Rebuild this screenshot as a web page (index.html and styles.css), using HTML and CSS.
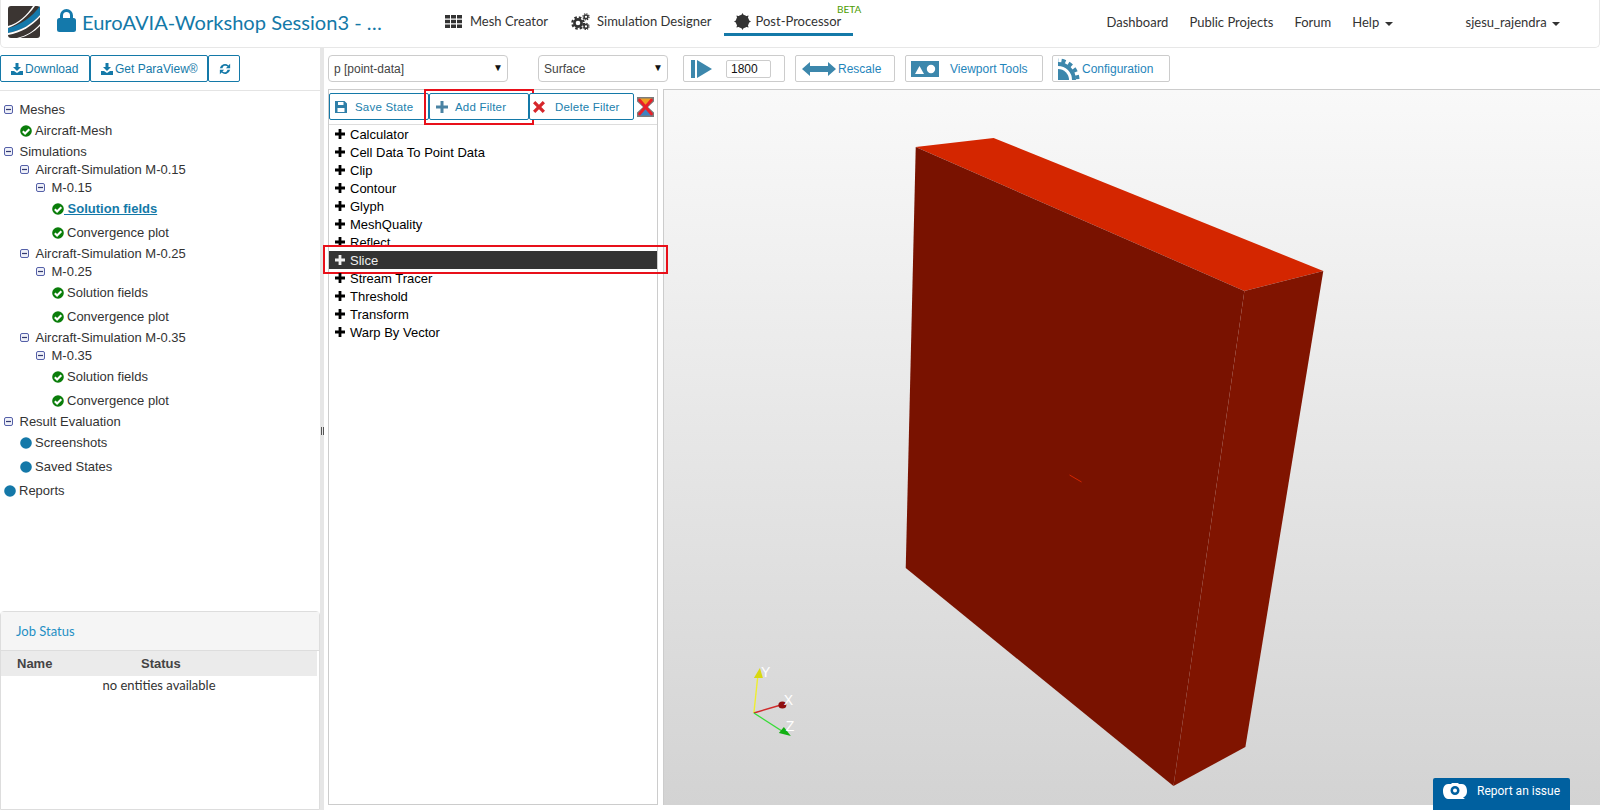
FILE: index.html
```html
<!DOCTYPE html>
<html lang="en">
<head>
<meta charset="utf-8">
<title>Post-Processor</title>
<link rel="stylesheet" href="styles.css">
</head>
<body>
<svg class="defs" width="0" height="0" aria-hidden="true">
  <symbol id="i-minus" viewBox="0 0 9 9"><rect x=".5" y=".5" width="8" height="8" rx="1.5" fill="#eef0f8" stroke="#5560a8"/><path d="M2 4.5h5" stroke="#333a70" stroke-width="1.2"/></symbol>
  <symbol id="i-check" viewBox="0 0 12 12"><circle cx="6" cy="6" r="5.8" fill="#0a7d0a"/><path d="M2.800 6.200l2.300 2.300 4.200-4.300" fill="none" stroke="#fff" stroke-width="2.100"/></symbol>
  <symbol id="i-dot" viewBox="0 0 12 12"><circle cx="6" cy="6" r="5.8" fill="#1478a8"/></symbol>
  <symbol id="i-plus" viewBox="0 0 10 10"><path d="M3.600 0h2.800v3.600H10v2.800H6.400V10H3.600V6.400H0V3.600h3.600z"/></symbol>
  <symbol id="i-down" viewBox="0 0 12 12"><path d="M4.500 0h3v4h2.500L6 8 2 4h2.500zM0 8h3l3 2 3-2h3v4H0z"/></symbol>
</svg>

<header class="topbar">
  <svg class="logo" viewBox="0 0 32 32"><rect width="32" height="32" rx="3" fill="#3b3532"/><path d="M0 22C13 19 24 11 32 0v9C24 18 13 25 0 27z" fill="#1479ab"/><path d="M0 20C11 17 19 9 25 0h2C20 10 11 18 0 22zM0 27c13-2 24-9 32-18v2C24 20 13 27 0 29zM9 32c9-2 17-7 23-14v2c-6 6-13 10-20 12z" fill="#fff"/></svg>
  <svg class="lock" viewBox="0 0 19 23"><path d="M4.500 10V6.500a5 5 0 0 1 10 0V10" fill="none" stroke="#1479ab" stroke-width="3"/><rect y="9" width="19" height="14" rx="2.500" fill="#1479ab"/></svg>
  <h1 class="title">EuroAVIA-Workshop Session3 - …</h1>
  <nav class="mainnav">
    <a class="navitem">
      <svg class="navicon" viewBox="0 0 17 13"><path d="M0 0h5v3.600H0zM6 0h5v3.600H6zM12 0h5v3.600h-5zM0 4.700h5v3.600H0zM6 4.700h5v3.600H6zM12 4.700h5v3.600h-5zM0 9.400h5V13H0zM6 9.400h5V13H6zM12 9.400h5V13h-5z" fill="#333"/></svg>
      Mesh Creator</a>
    <a class="navitem">
      <svg class="navicon cogs" viewBox="0 0 19 17"><g fill="none" stroke="#333"><circle cx="7" cy="10" r="3.600" stroke-width="2.600"/><circle cx="7" cy="10" r="5.700" stroke-width="2.200" stroke-dasharray="2.500 2"/><circle cx="15" cy="3.800" r="1.900" stroke-width="1.500"/><circle cx="15" cy="3.800" r="3.100" stroke-width="1.100" stroke-dasharray="1.300 1.130"/><circle cx="15" cy="13.400" r="1.900" stroke-width="1.500"/><circle cx="15" cy="13.400" r="3.100" stroke-width="1.100" stroke-dasharray="1.300 1.130"/></g></svg>
      Simulation Designer</a>
    <a class="navitem active">
      <svg class="navicon sun" viewBox="0 0 16 16"><circle cx="8" cy="8" r="6.300" fill="#333"/><path d="M8 0l1.500 2.500h-3zM8 16l-1.500-2.500h3zM0 8l2.500-1.500v3zM16 8l-2.500 1.500v-3zM2.300 2.300l2.800.7-2.100 2.100zM13.700 13.700l-2.800-.7 2.100-2.100zM13.700 2.300l-.7 2.800-2.100-2.100zM2.300 13.700l.7-2.800 2.100 2.100z" fill="#333"/></svg>
      Post-Processor<span class="beta">BETA</span></a>
  </nav>
  <nav class="sidenav">
    <a class="sidelink">Dashboard</a>
    <a class="sidelink">Public Projects</a>
    <a class="sidelink">Forum</a>
    <a class="sidelink">Help <i class="caret"></i></a>
    <a class="sidelink user">sjesu_rajendra <i class="caret"></i></a>
  </nav>
</header>

<div class="workspace">
  <aside class="sidebar">
    <div class="sidetools">
      <button class="tbtn dl"><svg class="ic12" viewBox="0 0 12 12"><use href="#i-down"/></svg>Download</button>
      <button class="tbtn pv"><svg class="ic12" viewBox="0 0 12 12"><use href="#i-down"/></svg>Get ParaView®</button>
      <button class="tbtn rf"><svg class="ic12" viewBox="0 0 14 14"><path d="M1 6a6 6 0 0 1 10-3l2-2v5H8l2-2a3.700 3.700 0 0 0-6 2zM13 8a6 6 0 0 1-10 3l-2 2V8h5l-2 2a3.700 3.700 0 0 0 6-2z"/></svg></button>
    </div>
    <ul class="tree">
      <li class="cap l0"><svg class="box"><use href="#i-minus"/></svg>Meshes</li>
      <li class="leaf l1"><svg class="st"><use href="#i-check"/></svg>Aircraft-Mesh</li>
      <li class="cap l0"><svg class="box"><use href="#i-minus"/></svg>Simulations</li>
      <li class="cap l1"><svg class="box"><use href="#i-minus"/></svg>Aircraft-Simulation M-0.15</li>
      <li class="cap l2"><svg class="box"><use href="#i-minus"/></svg>M-0.15</li>
      <li class="leaf l3"><svg class="st"><use href="#i-check"/></svg><a class="current">&nbsp;Solution fields</a></li>
      <li class="leaf l3"><svg class="st"><use href="#i-check"/></svg>Convergence plot</li>
      <li class="cap l1"><svg class="box"><use href="#i-minus"/></svg>Aircraft-Simulation M-0.25</li>
      <li class="cap l2"><svg class="box"><use href="#i-minus"/></svg>M-0.25</li>
      <li class="leaf l3"><svg class="st"><use href="#i-check"/></svg>Solution fields</li>
      <li class="leaf l3"><svg class="st"><use href="#i-check"/></svg>Convergence plot</li>
      <li class="cap l1"><svg class="box"><use href="#i-minus"/></svg>Aircraft-Simulation M-0.35</li>
      <li class="cap l2"><svg class="box"><use href="#i-minus"/></svg>M-0.35</li>
      <li class="leaf l3"><svg class="st"><use href="#i-check"/></svg>Solution fields</li>
      <li class="leaf l3"><svg class="st"><use href="#i-check"/></svg>Convergence plot</li>
      <li class="cap l0"><svg class="box"><use href="#i-minus"/></svg>Result Evaluation</li>
      <li class="leaf l1"><svg class="st"><use href="#i-dot"/></svg>Screenshots</li>
      <li class="leaf l1"><svg class="st"><use href="#i-dot"/></svg>Saved States</li>
      <li class="leaf l0"><svg class="st"><use href="#i-dot"/></svg>Reports</li>
    </ul>
    <section class="jobs">
      <h2 class="jobs-head">Job Status</h2>
      <div class="jobs-cols"><span class="col-name">Name</span><span>Status</span></div>
      <p class="jobs-empty">no entities available</p>
    </section>
  </aside>

  <div class="splitter"><span class="grip"></span></div>

  <main class="content">
    <div class="toolbar">
      <div class="select sel-a">p [point-data]<i class="sel-arrow">▼</i></div>
      <div class="select sel-b">Surface<i class="sel-arrow">▼</i></div>
      <div class="gbtn play">
        <svg class="gi" viewBox="0 0 21 18"><path d="M0 0h4v18H0zM6 0l15 9-15 9z"/></svg>
        <span class="timefield">1800</span>
      </div>
      <button class="gbtn rescale">
        <svg class="gi wide" viewBox="0 0 34 14"><path d="M0 7l8-7v4h18V0l8 7-8 7v-4H8v4z"/></svg>Rescale</button>
      <button class="gbtn vtools">
        <svg class="gi vt" viewBox="0 0 28 16"><path fill-rule="evenodd" d="M0 0h28v16H0zM4 13h9L8.500 5zM20 3.800a4.200 4.200 0 1 0 0 8.400 4.200 4.200 0 0 0 0-8.400z"/></svg>Viewport Tools</button>
      <button class="gbtn config">
        <svg class="gi cf" viewBox="0 0 22 22"><circle class="cf-solid" cx="0" cy="22" r="11"/><circle class="cf-ring" cx="0" cy="22" r="16"/><circle class="cf-teeth" cx="0" cy="22" r="19.500"/></svg>Configuration</button>
    </div>
    <div class="panels">
      <section class="filters">
        <div class="filter-actions">
          <button class="fbtn save">
            <svg class="fi" viewBox="0 0 12 12"><path fill-rule="evenodd" d="M0 0h9.500L12 2.500V12H0zM3 1v3h5.500V1zM2.500 7v4h7V7z" fill="#2f7fa8"/></svg>Save State</button>
          <button class="fbtn add marked">
            <svg class="fi" viewBox="0 0 12 12"><path d="M4.500 0h3v4.500H12v3H7.500V12h-3V7.500H0v-3h4.500z" fill="#4a83a3"/></svg>Add Filter</button>
          <button class="fbtn del">
            <svg class="fi xi" viewBox="0 0 12 12"><path d="M0 2.300L2.300 0 6 3.700 9.700 0 12 2.300 8.300 6 12 9.700 9.700 12 6 8.300 2.300 12 0 9.700 3.700 6z" fill="#d6262b"/></svg>Delete Filter</button>
          <svg class="clear" viewBox="0 0 17 20"><path d="M0 0h17v4.500L11 10l6 5.500V20H0v-4.500L6 10 0 4.500z" fill="#7c7c7c"/><path d="M2 1.500h13v3l-6.500 5-6.500-5z" fill="#ef9f21"/><path d="M2 18.500h13v-3l-6.500-5-6.500 5z" fill="#3e82c0"/><path d="M2.500 3l12 14M14.500 3l-12 14" stroke="#ea1f28" stroke-width="2.800" stroke-linecap="round"/></svg>
        </div>
        <ul class="filter-list">
          <li class="fitem"><svg class="plus"><use href="#i-plus"/></svg>Calculator</li>
          <li class="fitem"><svg class="plus"><use href="#i-plus"/></svg>Cell Data To Point Data</li>
          <li class="fitem"><svg class="plus"><use href="#i-plus"/></svg>Clip</li>
          <li class="fitem"><svg class="plus"><use href="#i-plus"/></svg>Contour</li>
          <li class="fitem"><svg class="plus"><use href="#i-plus"/></svg>Glyph</li>
          <li class="fitem"><svg class="plus"><use href="#i-plus"/></svg>MeshQuality</li>
          <li class="fitem"><svg class="plus"><use href="#i-plus"/></svg>Reflect</li>
          <li class="fitem picked"><svg class="plus"><use href="#i-plus"/></svg>Slice</li>
          <li class="fitem"><svg class="plus"><use href="#i-plus"/></svg>Stream Tracer</li>
          <li class="fitem"><svg class="plus"><use href="#i-plus"/></svg>Threshold</li>
          <li class="fitem"><svg class="plus"><use href="#i-plus"/></svg>Transform</li>
          <li class="fitem"><svg class="plus"><use href="#i-plus"/></svg>Warp By Vector</li>
        </ul>
      </section>
      <section class="viewport">
        <svg class="scene" viewBox="663 90 937 715" preserveAspectRatio="none">
          <polygon points="915,147 993,138 1323,271 1244,291" fill="#d42600"/>
          <polygon points="915,147 1244,291 1173,786 905,568" fill="#791200"/>
          <polygon points="1244,291 1323,271 1245,747 1173,786" fill="#801400"/>
          <path d="M1069 475l12 7" stroke="#d42600" stroke-width="1"/>
          <path d="M753 713l4-38" stroke="#eeee30" stroke-width="1.400"/>
          <path d="M753 713l27-8" stroke="#d02a2a" stroke-width="1.400"/>
          <path d="M753 713l28 18" stroke="#38dc38" stroke-width="1.400"/>
          <polygon points="759,668 762,678 753,678" fill="#d8d810"/>
          <ellipse cx="781.500" cy="705" rx="4" ry="3.500" fill="#8f0f0f"/>
          <polygon points="778,733 783,727 790,736" fill="#12b012"/>
          <text class="axis" x="760" y="677">Y</text>
          <text class="axis" x="783" y="705">X</text>
          <text class="axis" x="785" y="731">Z</text>
        </svg>
      </section>
    </div>
  </main>
</div>

<a class="report">
  <svg class="report-icon" viewBox="0 0 24 16"><path fill-rule="evenodd" d="M5 1h3l1-1h6l1 1h3c3 0 5 3 5 7s-2 6-4 6.500l2 1.500H5c-3 0-5-4-5-8s2-7 5-7zM12 3a4.500 4.500 0 1 0 0 9 4.500 4.500 0 0 0 0-9zM12 5.500a2 2 0 1 1 0 4 2 2 0 0 1 0-4z" fill="#fff"/></svg>
  Report an issue</a>
</body>
</html>
```
FILE: styles.css
```css
* { box-sizing: border-box; }
html, body { margin: 0; height: 810px; overflow: hidden; background: #fff; }
body { font-family: "Liberation Sans", Arial, sans-serif; font-size: 13px; color: #333; display: flex; flex-direction: column; }
.defs { position: absolute; }
ul { list-style: none; margin: 0; padding: 0; }
button { font-family: inherit; background: #fff; cursor: pointer; margin: 0; }

/* Top bar */
.topbar { height: 48px; flex: none; display: flex; align-items: flex-start; border: 1px solid #e7e7e7; border-top: 0; border-radius: 0 0 5px 5px; font-family: Lato, sans-serif; }
.logo { width: 32px; height: 32px; margin: 6px 0 0 7px; flex: none; }
.lock { width: 19px; height: 23px; margin: 9px 0 0 17px; flex: none; }
.title { margin: 6px 0 0 6px; width: 306px; font-size: 20.100px; line-height: 32px; font-weight: 400; color: #1479a8; white-space: nowrap; }
.mainnav { display: flex; margin-left: 47px; }
.navitem { position: relative; display: flex; align-items: center; height: 36px; padding: 6px 10px 0; font-size: 13px; color: #333; white-space: nowrap; }
.navicon { width: 17px; height: 13px; margin-right: 8px; flex: none; }
.navicon.cogs { width: 19px; height: 17px; margin-right: 7px; }
.navicon.sun { width: 17px; height: 17px; margin-right: 5px; }
.navitem + .navitem { margin-left: 3px; }
.navitem.active { border-bottom: 3px solid #1479a8; padding: 9px 12px 0 10px; margin-left: 2px; }
.beta { position: absolute; top: 3px; right: -8px; font-size: 10px; line-height: 12px; color: #4d9c00; }
.sidenav { display: flex; margin-left: auto; padding: 13px 39px 0 0; font-size: 13px; line-height: 18px; }
.sidelink { margin-left: 21px; color: #333; white-space: nowrap; }
.sidelink.user { margin-left: 73px; }
.caret { display: inline-block; width: 0; height: 0; margin-left: 2px; vertical-align: middle; border-top: 4px solid #333; border-left: 4px solid transparent; border-right: 4px solid transparent; }

/* Layout */
.workspace { flex: 1; min-height: 0; display: flex; }
.sidebar { width: 320px; flex: none; display: flex; flex-direction: column; }
.splitter { width: 4px; flex: none; background: #e6e6e6; display: flex; align-items: center; justify-content: center; }
.grip { width: 3px; height: 8px; margin-top: 4px; border-left: 1px solid #555; border-right: 1px solid #555; }
.content { flex: 1; min-width: 0; display: flex; flex-direction: column; padding-left: 4px; }

/* Sidebar */
.sidetools { display: flex; height: 43px; padding: 7px 0 0; border-bottom: 1px solid #e4e4e4; flex: none; }
.tbtn { display: flex; align-items: center; height: 27px; padding: 0 0 0 10px; border: 1px solid #1479a8; border-radius: 2px; color: #1479a8; font-size: 12px; font-family: "Liberation Sans", sans-serif; }
.tbtn svg { fill: #1479a8; margin-right: 2px; }
.tbtn.dl { width: 90px; }
.tbtn.pv { width: 118px; }
.tbtn.rf { width: 32px; }
.ic12 { width: 12px; height: 12px; flex: none; }
.tree { padding-top: 9.500px; }
.cap { height: 18px; line-height: 18px; display: flex; align-items: center; white-space: nowrap; }
.leaf { height: 24px; line-height: 24px; display: flex; align-items: center; white-space: nowrap; }
.box { width: 9px; height: 9px; margin-right: 6.500px; flex: none; }
.st { width: 12px; height: 12px; margin-right: 3px; flex: none; }
.cap.l0 { padding-left: 4px; }
.cap.l1 { padding-left: 20px; }
.cap.l2 { padding-left: 36px; }
.leaf.l0 { padding-left: 4px; }
.leaf.l1 { padding-left: 20px; }
.leaf.l3 { padding-left: 52px; }
.current { margin-left: -3px; color: #1479a8; font-weight: 700; text-decoration: underline; }

.jobs { margin: auto 0 0 0; height: 199px; width: 320px; border: 1px solid #ddd; border-radius: 4px 4px 0 0; flex: none; font-family: Lato, sans-serif; }
.jobs-head { margin: 0; height: 39px; padding-left: 15px; line-height: 38px; background: #f5f5f5; border-bottom: 1px solid #ddd; font-size: 13px; font-weight: 400; color: #1f8fc4; }
.jobs-cols { display: flex; height: 25px; line-height: 25px; margin-right: 2px; padding-left: 16px; background: #ebebeb; font: 700 13px/25px "Liberation Sans", sans-serif; color: #444; }
.col-name { width: 124px; }
.jobs-empty { margin: 0; padding-right: 2px; text-align: center; font-size: 13px; line-height: 18px; color: #333; }

/* Toolbar */
.toolbar { display: flex; height: 41px; flex: none; padding-top: 7px; }
.select { position: relative; height: 27px; line-height: 27px; padding-left: 5px; border: 1px solid #ccc; border-radius: 4px; font-size: 12px; color: #444; }
.sel-a { width: 180px; }
.sel-b { width: 130px; margin-left: 30px; }
.sel-arrow { position: absolute; right: 4px; top: -2px; font-style: normal; font-size: 10px; color: #111; }
.gbtn { display: flex; align-items: center; height: 27px; border: 1px solid #ccc; border-radius: 2px; padding: 0; color: #1f85bb; font: 12px "Liberation Sans", sans-serif; background: #fff; }
.gi { fill: #3c87ac; flex: none; }
.play { width: 102px; margin-left: 15px; padding-left: 7px; }
.play .gi { width: 21px; height: 18px; }
.timefield { width: 45px; height: 18px; margin-left: 14px; padding-left: 4px; border: 1px solid #ccc; border-radius: 2px; line-height: 16px; font-size: 12px; color: #111; }
.rescale { width: 100px; margin-left: 10px; padding-left: 6px; }
.gi.wide { width: 34px; height: 14px; margin-right: 2px; }
.vtools { width: 138px; margin-left: 10px; padding-left: 5px; }
.gi.vt { width: 28px; height: 16px; margin-right: 11px; }
.config { width: 118px; margin-left: 9px; padding-left: 5px; }
.gi.cf { width: 22px; height: 22px; margin-right: 2px; }
.cf-solid { fill: #3c87ac; }
.cf-ring { fill: none; stroke: #3c87ac; stroke-width: 4; }
.cf-teeth { fill: none; stroke: #3c87ac; stroke-width: 4; stroke-dasharray: 4 3.300; }

/* Panels */
.panels { flex: 1; min-height: 0; display: flex; padding-bottom: 5px; }
.filters { width: 330px; flex: none; border: 1px solid #ccc; }
.filter-actions { display: flex; align-items: flex-start; height: 35px; padding: 3px 0 0; border-bottom: 1px solid #ddd; }
.fbtn { position: relative; display: flex; align-items: center; height: 27px; border: 1px solid #1479a8; border-radius: 2px; color: #2180ad; font: 11.500px "Liberation Sans", sans-serif; letter-spacing: .2px; padding: 0; background: #fff; }
.fi { width: 12px; height: 12px; flex: none; }
.save { width: 100px; padding-left: 5px; }
.save .fi { margin-right: 8px; }
.add { width: 100px; padding-left: 6px; }
.add .fi { margin-right: 7px; }
.del { width: 105px; padding-left: 3px; }
.del .fi { margin-right: 10px; }
.marked::after { content: ""; position: absolute; top: -5px; bottom: -6px; left: -6px; right: -6px; border: 2px solid #e8101a; }
.clear { width: 17px; height: 20px; margin: 4px 0 0 3px; flex: none; }
.filter-list { padding: 0; }
.fitem { height: 18px; display: flex; align-items: center; padding-left: 6px; font-size: 13px; color: #000; white-space: nowrap; position: relative; }
.plus { width: 10px; height: 10px; margin-right: 5px; flex: none; fill: #000; }
.fitem.picked { background: #333; color: #eee; }
.fitem.picked .plus { fill: #eee; }
.fitem.picked::after { content: ""; position: absolute; top: -6px; bottom: -5px; left: -6px; right: -11px; border: 2px solid #e8101a; }

.viewport { flex: 1; min-width: 0; margin-left: 5px; border-top: 1px solid #ccc; border-left: 1px solid #ccc; background: linear-gradient(#f9f9f9, #d3d3d3); }
.scene { display: block; width: 100%; height: 100%; }
.axis { fill: #fff; font: 14px "Liberation Sans", sans-serif; }

/* Report */
.report { position: absolute; right: 30px; bottom: 0; display: flex; align-items: center; width: 137px; height: 32px; padding: 0 0 6px 10px; background: #00609f; border-radius: 2px 2px 0 0; color: #fff; font: 12px Roboto, sans-serif; white-space: nowrap; }
.report-icon { width: 24px; height: 16px; margin-right: 10px; flex: none; }
```
